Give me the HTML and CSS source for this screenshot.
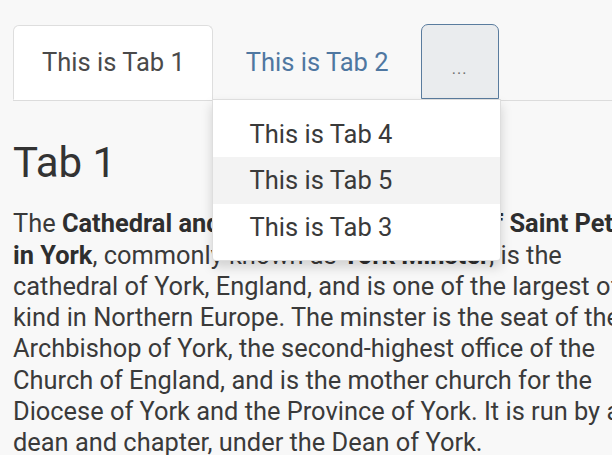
FILE: index.html
```html
<!DOCTYPE html>
<html lang="en">
<head>
<meta charset="utf-8">
<title>Tabs</title>
<link rel="stylesheet" href="styles.css">
</head>
<body>
<div class="page">
  <ul class="tabs">
    <li class="tab active"><a class="tab-link">This is Tab 1</a></li>
    <li class="tab"><a class="tab-link link">This is Tab 2</a></li>
    <li class="tab more">
      <button class="more-btn">...</button>
      <ul class="menu">
        <li class="menu-item">This is Tab 4</li>
        <li class="menu-item hover">This is Tab 5</li>
        <li class="menu-item">This is Tab 3</li>
      </ul>
    </li>
  </ul>
  <div class="content">
    <h2 class="title">Tab 1</h2>
    <p class="text">The <b>Cathedral and Metropolitical Church of Saint Peter</b><br><b>in York</b>, commonly known as <b>York Minster</b>, is the<br>cathedral of York, England, and is one of the largest of its<br>kind in Northern Europe. The minster is the seat of the<br>Archbishop of York, the second-highest office of the<br>Church of England, and is the mother church for the<br>Diocese of York and the Province of York. It is run by a<br>dean and chapter, under the Dean of York.</p>
  </div>
</div>
</body>
</html>
```

FILE: styles.css
```css
html, body {
  margin: 0;
  padding: 0;
  overflow: hidden;
}
body {
  background: #f8f8f8;
  font-family: Roboto, "Liberation Sans", sans-serif;
  color: #363636;
  font-size: 25.4px;
  line-height: 31.25px;
}
.page {
  padding: 25px 0 0 13px;
}
.tabs {
  list-style: none;
  margin: 0;
  padding: 0;
  display: flex;
  border-bottom: 1px solid #dcdcdc;
  height: 75px;
}
.tab {
  margin-right: 4px;
  margin-bottom: -1px;
  position: relative;
}
.tab-link {
  display: block;
  padding: 21px 27px 21px 28px;
  border: 1px solid transparent;
  border-radius: 6px 6px 0 0;
  color: #444;
  font-size: 25.5px;
  cursor: pointer;
}
.tab.active .tab-link {
  background: #fff;
  border-color: #dedede #dedede #fff;
  color: #4a4a4a;
}
.tab-link.link {
  color: #4f77a1;
}
.more-btn {
  display: block;
  box-sizing: border-box;
  width: 78px;
  height: 75px;
  margin: -1px 0 0 0;
  background: #eaecee;
  border: 1px solid #5a7c9e;
  border-radius: 7px 7px 0 0;
  color: #6f6f6f;
  font-family: Roboto, "Liberation Sans", sans-serif;
  font-size: 16px;
  letter-spacing: 1px;
  padding: 14px 0 0 0;
}
.menu {
  position: absolute;
  top: 74px;
  right: -2px;
  width: 289px;
  box-sizing: border-box;
  list-style: none;
  margin: 0;
  padding: 11px 0 10px;
  background: #fff;
  border: 1px solid rgba(0, 0, 0, 0.13);
  border-radius: 0 0 4px 4px;
  box-shadow: 0 6px 12px rgba(0, 0, 0, 0.16);
  z-index: 10;
}
.menu-item {
  padding: 8px 0 7px 37px;
  color: #3a3a3a;
  font-size: 25.5px;
  white-space: nowrap;
}
.menu-item.hover {
  background: #f3f3f3;
}
.content {
  padding-top: 37px;
}
.title {
  margin: 0 0 20px 0;
  font-size: 42px;
  font-weight: 400;
  line-height: 50.4px;
  color: #333;
}
.text {
  margin: 0;
  white-space: nowrap;
  color: #3a3a3a;
}
.text b {
  font-weight: 700;
  color: #2e2e2e;
}
```
